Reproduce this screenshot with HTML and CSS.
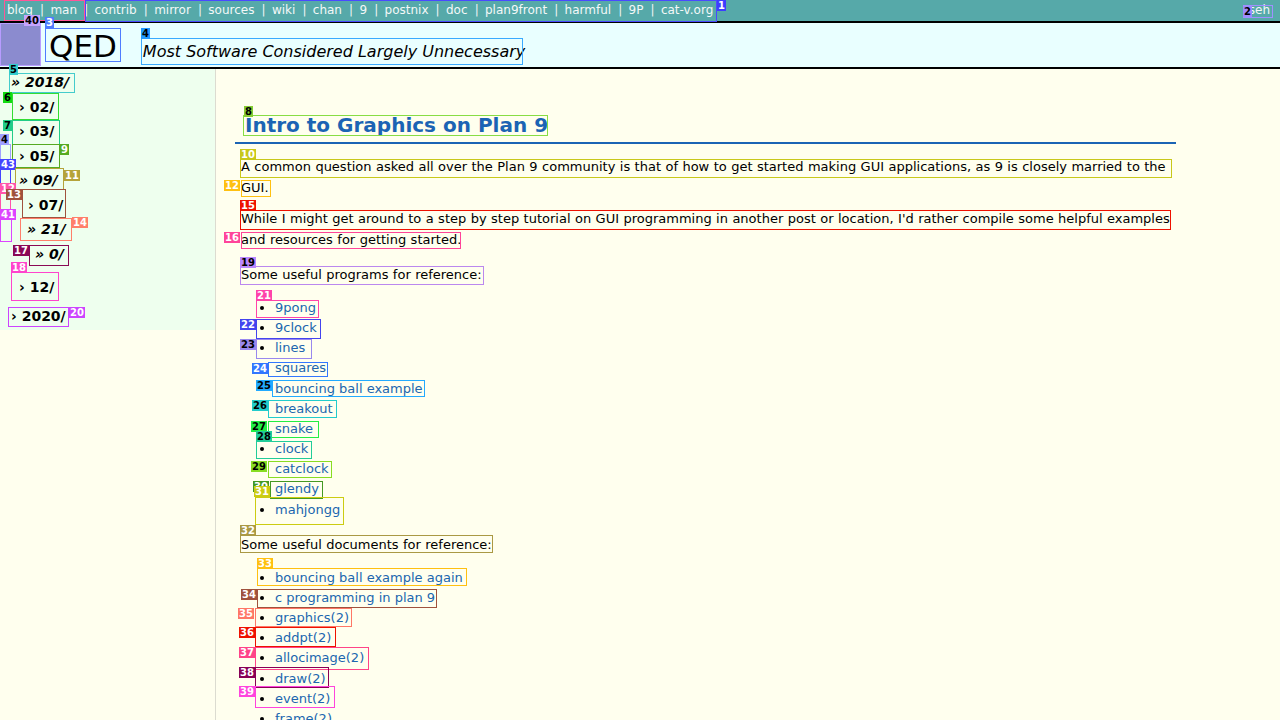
FILE: index.html
```html
<!DOCTYPE html>
<html lang="en">
<head>
<meta charset="utf-8">
<title>Intro to Graphics on Plan 9</title>
<link rel="stylesheet" href="styles.css">
</head>
<body>
<header class="topbar">
  <nav class="sites"><a href="#">blog</a> | <a href="#">man</a> | <a href="#">contrib</a> | <a href="#">mirror</a> | <a href="#">sources</a> | <a href="#">wiki</a> | <a href="#">chan</a> | <a href="#">9</a> | <a href="#">postnix</a> | <a href="#">doc</a> | <a href="#">plan9front</a> | <a href="#">harmful</a> | <a href="#">9P</a> | <a href="#">cat-v.org</a></nav>
  <div class="tools"><a href="#">seh</a></div>
</header>
<div class="masthead">
  <div class="logo"></div>
  <h1 class="site-title">QED</h1>
  <span class="tagline">Most Software Considered Largely Unnecessary</span>
</div>
<div class="layout">
  <aside class="side">
    <a class="arch open l0" href="#">» 2018/</a>
    <a class="arch l1" href="#">› 02/</a>
    <a class="arch l1" href="#">› 03/</a>
    <a class="arch l1" href="#">› 05/</a>
    <a class="arch open l1" href="#">» 09/</a>
    <a class="arch l2" href="#">› 07/</a>
    <a class="arch open l2b" href="#">» 21/</a>
    <a class="arch open l3" href="#">» 0/</a>
    <a class="arch l1 gap-a" href="#">› 12/</a>
    <a class="arch l0 gap-b" href="#">› 2020/</a>
  </aside>
  <main class="main">
    <article class="post">
      <h1 class="post-title">Intro to Graphics on Plan 9</h1>
      <p>A common question asked all over the Plan 9 community is that of how to get started making GUI applications, as 9 is closely married to the GUI.</p>
      <p>While I might get around to a step by step tutorial on GUI programming in another post or location, I'd rather compile some helpful examples and resources for getting started.</p>
      <p class="lead">Some useful programs for reference:</p>
      <ul>
        <li><a href="#">9pong</a></li>
        <li><a href="#">9clock</a></li>
        <li><a href="#">lines</a></li>
        <li><a href="#">squares</a></li>
        <li><a href="#">bouncing ball example</a></li>
        <li><a href="#">breakout</a></li>
        <li><a href="#">snake</a></li>
        <li><a href="#">clock</a></li>
        <li><a href="#">catclock</a></li>
        <li><a href="#">glendy</a></li>
        <li><a href="#">mahjongg</a></li>
      </ul>
      <p class="lead">Some useful documents for reference:</p>
      <ul>
        <li><a href="#">bouncing ball example again</a></li>
        <li><a href="#">c programming in plan 9</a></li>
        <li><a href="#">graphics(2)</a></li>
        <li><a href="#">addpt(2)</a></li>
        <li><a href="#">allocimage(2)</a></li>
        <li><a href="#">draw(2)</a></li>
        <li><a href="#">event(2)</a></li>
        <li><a href="#">frame(2)</a></li>
        <li><a href="#">keyboard(2)</a></li>
        <li><a href="#">mouse(2)</a></li>
      </ul>
    </article>
  </main>
</div>

<div class="marks" aria-hidden="true">
  <div class="box" style="--c:#ff5599;left:4px;top:0px;width:81px;height:21px"></div>
  <div class="box" style="--c:#4a4aff;left:85px;top:0px;width:632px;height:22px"></div>
  <span class="tag" style="--c:#3d3dff;left:717px;top:0px">1</span>
  <div class="box" style="--c:#a090ff;left:1243px;top:5px;width:30px;height:13px"></div>
  <span class="tag dark" style="--c:#9c8cff;left:1243px;top:6px">2</span>
  <div class="box" style="--c:#4f7cff;left:45px;top:28px;width:76px;height:34px"></div>
  <span class="tag" style="--c:#4f7cff;left:45px;top:17px">3</span>
  <div class="box" style="--c:#3aaaff;left:141px;top:38px;width:382px;height:27px"></div>
  <span class="tag dark" style="--c:#2299ff;left:141px;top:28px">4</span>
  <div class="box" style="--c:#b89cff;left:0px;top:23px;width:41px;height:43px"></div>
  <span class="tag dark" style="--c:#c6a4ff;left:24px;top:15px">40</span>

  <div class="box" style="--c:#44cccc;left:9px;top:73px;width:66px;height:20px"></div>
  <span class="tag dark" style="--c:#33cccc;left:9px;top:64px">5</span>
  <div class="box" style="--c:#33dd33;left:12px;top:93px;width:47px;height:27px"></div>
  <span class="tag dark" style="--c:#11dd11;left:3px;top:92px">6</span>
  <div class="box" style="--c:#22cc88;left:12px;top:120px;width:48px;height:25px"></div>
  <span class="tag dark" style="--c:#22cc88;left:3px;top:120px">7</span>
  <div class="box" style="--c:#9f9fff;left:0px;top:144px;width:11px;height:16px"></div>
  <span class="tag dark" style="--c:#9f9fff;left:0px;top:134px">4</span>
  <div class="box" style="--c:#55aa22;left:12px;top:144px;width:48px;height:24px"></div>
  <span class="tag" style="--c:#55aa22;left:60px;top:144px">9</span>
  <div class="box" style="--c:#4444ff;left:0px;top:169px;width:11px;height:24px"></div>
  <span class="tag" style="--c:#4444ff;left:0px;top:159px">43</span>
  <div class="box" style="--c:#b5a33a;left:15px;top:168px;width:49px;height:22px"></div>
  <span class="tag" style="--c:#b5a33a;left:64px;top:170px">11</span>
  <div class="box" style="--c:#ff55aa;left:0px;top:192px;width:11px;height:26px"></div>
  <span class="tag" style="--c:#ff55aa;left:0px;top:183px">12</span>
  <div class="box" style="--c:#a0523d;left:22px;top:189px;width:44px;height:29px"></div>
  <span class="tag" style="--c:#a0523d;left:6px;top:189px">13</span>
  <div class="box" style="--c:#dd44ff;left:0px;top:218px;width:12px;height:24px"></div>
  <span class="tag" style="--c:#dd44ff;left:0px;top:209px">41</span>
  <div class="box" style="--c:#ff7f6a;left:20px;top:218px;width:52px;height:23px"></div>
  <span class="tag" style="--c:#ff7f6a;left:72px;top:217px">14</span>
  <div class="box" style="--c:#8a0a55;left:29px;top:245px;width:40px;height:21px"></div>
  <span class="tag" style="--c:#8a0a55;left:13px;top:245px">17</span>
  <div class="box" style="--c:#ff44cc;left:11px;top:272px;width:48px;height:29px"></div>
  <span class="tag" style="--c:#ff44cc;left:11px;top:262px">18</span>
  <div class="box" style="--c:#cc44ff;left:8px;top:307px;width:61px;height:20px"></div>
  <span class="tag" style="--c:#cc44ff;left:69px;top:307px">20</span>

  <div class="box" style="--c:#88dd44;left:243px;top:115px;width:305px;height:21px"></div>
  <span class="tag dark" style="--c:#88cc33;left:244px;top:106px">8</span>
  <div class="box" style="--c:#c8c81a;left:240px;top:159px;width:932px;height:19px"></div>
  <span class="tag" style="--c:#c8c81a;left:240px;top:149px">10</span>
  <div class="box" style="--c:#ffc010;left:241px;top:180px;width:30px;height:17px"></div>
  <span class="tag" style="--c:#ffc010;left:224px;top:180px">12</span>
  <div class="box" style="--c:#ee1100;left:240px;top:210px;width:931px;height:20px"></div>
  <span class="tag" style="--c:#ee1100;left:240px;top:200px">15</span>
  <div class="box" style="--c:#ff4499;left:241px;top:232px;width:220px;height:17px"></div>
  <span class="tag" style="--c:#ff4499;left:224px;top:232px">16</span>
  <div class="box" style="--c:#bb88ee;left:240px;top:266px;width:244px;height:19px"></div>
  <span class="tag dark" style="--c:#bb88ff;left:240px;top:257px">19</span>
  <div class="box" style="--c:#ff44aa;left:256px;top:300px;width:63px;height:18px"></div>
  <span class="tag" style="--c:#ff44aa;left:256px;top:290px">21</span>
  <div class="box" style="--c:#4444ee;left:256px;top:319px;width:65px;height:20px"></div>
  <span class="tag" style="--c:#4444ee;left:240px;top:319px">22</span>
  <div class="box" style="--c:#9988ee;left:256px;top:339px;width:56px;height:20px"></div>
  <span class="tag dark" style="--c:#9988ee;left:240px;top:339px">23</span>
  <div class="box" style="--c:#3377ff;left:268px;top:362px;width:60px;height:15px"></div>
  <span class="tag" style="--c:#3377ff;left:252px;top:363px">24</span>
  <div class="box" style="--c:#22aaff;left:272px;top:380px;width:153px;height:17px"></div>
  <span class="tag dark" style="--c:#22aaff;left:256px;top:380px">25</span>
  <div class="box" style="--c:#22cccc;left:268px;top:400px;width:69px;height:18px"></div>
  <span class="tag dark" style="--c:#22cccc;left:252px;top:400px">26</span>
  <div class="box" style="--c:#22ee44;left:268px;top:421px;width:51px;height:17px"></div>
  <span class="tag dark" style="--c:#22ee44;left:251px;top:421px">27</span>
  <div class="box" style="--c:#22cc99;left:256px;top:441px;width:56px;height:18px"></div>
  <span class="tag dark" style="--c:#22cc99;left:256px;top:431px">28</span>
  <div class="box" style="--c:#88dd22;left:268px;top:461px;width:64px;height:17px"></div>
  <span class="tag dark" style="--c:#88dd22;left:251px;top:461px">29</span>
  <div class="box" style="--c:#449922;left:270px;top:481px;width:53px;height:18px"></div>
  <span class="tag" style="--c:#449922;left:253px;top:481px">30</span>
  <div class="box" style="--c:#cccc11;left:255px;top:497px;width:89px;height:28px"></div>
  <span class="tag" style="--c:#cccc11;left:254px;top:486px">31</span>
  <div class="box" style="--c:#aa9944;left:240px;top:535px;width:253px;height:18px"></div>
  <span class="tag" style="--c:#aa9944;left:240px;top:525px">32</span>
  <div class="box" style="--c:#ffc010;left:257px;top:568px;width:210px;height:18px"></div>
  <span class="tag" style="--c:#ffc010;left:257px;top:558px">33</span>
  <div class="box" style="--c:#a0523d;left:257px;top:589px;width:180px;height:19px"></div>
  <span class="tag" style="--c:#a0523d;left:241px;top:589px">34</span>
  <div class="box" style="--c:#ff7766;left:255px;top:608px;width:97px;height:19px"></div>
  <span class="tag" style="--c:#ff7766;left:238px;top:608px">35</span>
  <div class="box" style="--c:#ee1100;left:255px;top:627px;width:81px;height:20px"></div>
  <span class="tag" style="--c:#ee1100;left:239px;top:627px">36</span>
  <div class="box" style="--c:#ff4488;left:255px;top:647px;width:114px;height:23px"></div>
  <span class="tag" style="--c:#ff4488;left:239px;top:647px">37</span>
  <div class="box" style="--c:#880055;left:255px;top:667px;width:74px;height:21px"></div>
  <span class="tag" style="--c:#880055;left:239px;top:667px">38</span>
  <div class="box" style="--c:#ff44dd;left:255px;top:686px;width:80px;height:22px"></div>
  <span class="tag" style="--c:#ff44dd;left:239px;top:686px">39</span>
</div>
</body>
</html>
```

FILE: styles.css
```css
html, body {
  margin: 0;
  padding: 0;
}
body {
  font-family: "DejaVu Sans", "Liberation Sans", sans-serif;
  color: #000;
  background: #ffffee;
  overflow: hidden;
  position: relative;
}
a {
  text-decoration: none;
}

/* top bar */
.topbar {
  display: flex;
  justify-content: space-between;
  height: 21px;
  line-height: 21px;
  background: #56a9a9;
  border-bottom: 2px solid #000;
  font-size: 12px;
  color: #eef4f4;
}
.sites {
  padding-left: 4.5px;
  white-space: nowrap;
}
.sites a {
  color: #f4f8f8;
  padding: 0 3.3px 0 2.5px;
}
.tools {
  padding-right: 10px;
}
.tools a {
  color: #f4f8f8;
}

/* masthead */
.masthead {
  display: flex;
  align-items: flex-start;
  height: 44px;
  background: #e9ffff;
  border-bottom: 2px solid #000;
}
.logo {
  width: 41px;
  height: 43px;
  background: #8b8bcf;
}
.site-title {
  margin: 5px 0 0 4px;
  padding: 0 4px;
  font-size: 31px;
  font-weight: normal;
  line-height: normal;
}
.tagline {
  margin: 19px 0 0 22px;
  font-size: 16px;
  font-style: italic;
}

/* layout */
.layout {
  display: flex;
  align-items: flex-start;
}
.side {
  width: 215px;
  flex: none;
  background: #eeffee;
  padding: 1px 0 2px;
  display: flex;
  flex-direction: column;
}
.arch {
  display: block;
  line-height: 24.5px;
  height: 24.5px;
  font-size: 14px;
  font-weight: bold;
  color: #000;
  white-space: nowrap;
}
.arch.open {
  font-style: italic;
}
.l0 { padding-left: 11px; }
.l1 { padding-left: 19px; }
.l2 { padding-left: 28px; }
.l2b { padding-left: 27px; }
.l3 { padding-left: 35px; }
.gap-a { margin-top: 8.5px; }
.gap-b { margin-top: 4.5px; }

.main {
  flex: 1;
  min-height: 700px;
  border-left: 1px solid #dcdcd0;
  padding: 0 104px 0 19px;
}
.post {
  font-size: 13px;
}
.post-title {
  margin: 46px 0 12px;
  padding: 0 0 6px 10px;
  font-size: 20px;
  line-height: 21px;
  color: #1b64b4;
  border-bottom: 2px solid #1b64b4;
}
.post p {
  margin: 0 0 0 6px;
  line-height: 21px;
  word-spacing: 0.3px;
}
.post p + p {
  margin-top: 10px;
}
.post p.lead {
  margin-top: 14px;
}
.post ul {
  margin: 13px 0 0 6px;
  padding-left: 34px;
  line-height: 20.15px;
}
.post li a {
  color: #2066ae;
}

/* annotation overlay */
.marks {
  position: absolute;
  left: 0;
  top: 0;
  width: 0;
  height: 0;
}
.box {
  position: absolute;
  box-sizing: border-box;
  border: 1px solid var(--c);
}
.tag {
  position: absolute;
  background: var(--c);
  color: #fff;
  font: bold 10px/11px "DejaVu Sans", sans-serif;
  padding: 0 1px;
  min-width: 7px;
  text-align: center;
}
.tag.dark {
  color: #000;
}
```
